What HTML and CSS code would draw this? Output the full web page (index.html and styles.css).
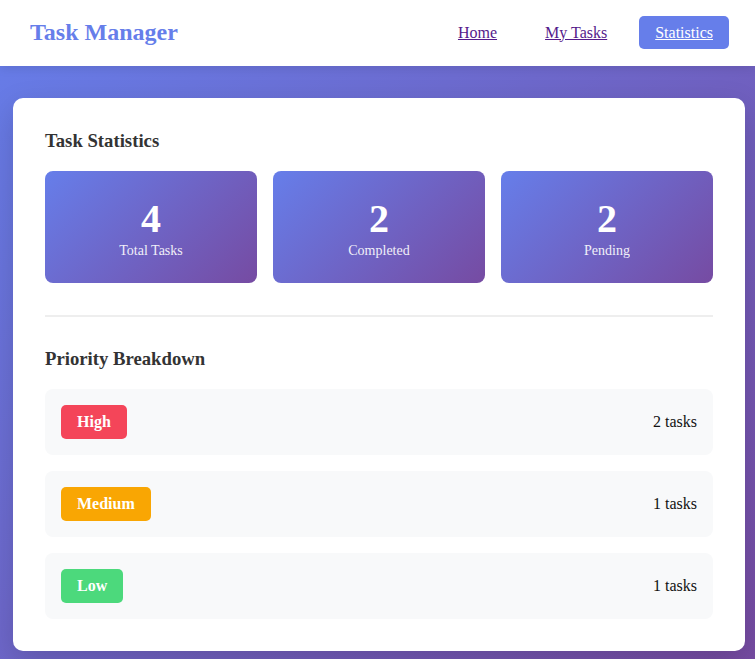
FILE: index.html
```html
<!DOCTYPE html>
<html lang="en">
<head>
<meta charset="utf-8">
<title>Task Manager</title>
<link rel="stylesheet" href="styles.css">
</head>
<body>
<header class="topbar">
  <div class="brand">Task Manager</div>
  <nav class="nav">
    <a class="nav-link" href="#home">Home</a>
    <a class="nav-link" href="#tasks">My Tasks</a>
    <a class="nav-link active" href="#stats">Statistics</a>
  </nav>
</header>
<main class="main">
  <section class="card">
    <h2 class="section-title">Task Statistics</h2>
    <div class="stats">
      <div class="stat"><div class="stat-num">4</div><div class="stat-label">Total Tasks</div></div>
      <div class="stat"><div class="stat-num">2</div><div class="stat-label">Completed</div></div>
      <div class="stat"><div class="stat-num">2</div><div class="stat-label">Pending</div></div>
    </div>
    <hr class="divider">
    <h2 class="section-title">Priority Breakdown</h2>
    <div class="rows">
      <div class="row"><span class="badge high">High</span><span class="count">2 tasks</span></div>
      <div class="row"><span class="badge medium">Medium</span><span class="count">1 tasks</span></div>
      <div class="row"><span class="badge low">Low</span><span class="count">1 tasks</span></div>
    </div>
  </section>
</main>
</body>
</html>
```
FILE: styles.css
```css
html, body {
  margin: 0;
  padding: 0;
}
body {
  font-family: "Liberation Serif", "Times New Roman", serif;
  min-height: 100vh;
  background: linear-gradient(135deg, #667eea 0%, #764ba2 100%);
}
.topbar {
  background: #fff;
  height: 66px;
  box-sizing: border-box;
  padding: 0 26px 0 30px;
  display: flex;
  align-items: center;
  justify-content: space-between;
  box-shadow: 0 2px 10px rgba(0, 0, 0, 0.1);
}
.brand {
  font-size: 24px;
  font-weight: bold;
  color: #667eea;
  margin-top: -1px;
}
.nav {
  display: flex;
  gap: 16px;
  margin-top: -2px;
}
.nav-link {
  font-size: 16px;
  line-height: 17px;
  padding: 8px 16px;
  border-radius: 5px;
  color: #551a8b;
  text-decoration: underline;
}
.nav-link.active {
  background: #667eea;
  color: #fff;
}
.main {
  padding: 32px 10px 8px 13px;
}
.card {
  background: #fff;
  border-radius: 10px;
  padding: 32px;
  box-shadow: 0 10px 30px rgba(0, 0, 0, 0.15);
}
.section-title {
  margin: 0 0 19px;
  font-size: 18.72px;
  line-height: 22px;
  font-weight: bold;
  color: #333;
}
.stats {
  display: grid;
  grid-template-columns: repeat(3, 1fr);
  gap: 16px;
}
.stat {
  background: linear-gradient(135deg, #667eea 0%, #764ba2 100%);
  border-radius: 8px;
  padding: 25px 10px 23px;
  text-align: center;
  color: #fff;
}
.stat-num {
  font-size: 40px;
  line-height: 46px;
  font-weight: bold;
}
.stat-label {
  font-size: 14px;
  line-height: 18px;
  opacity: 0.9;
}
.divider {
  border: 0;
  height: 2px;
  background: #eee;
  margin: 32px 0 31px;
}
.rows {
  display: flex;
  flex-direction: column;
  gap: 16px;
}
.row {
  background: #f8f9fa;
  border-radius: 8px;
  padding: 16px;
  display: flex;
  align-items: center;
  justify-content: space-between;
}
.badge {
  color: #fff;
  font-weight: bold;
  font-size: 16px;
  line-height: 18px;
  padding: 8px 16px;
  border-radius: 5px;
}
.badge.high { background: #f44559; }
.badge.medium { background: #f9a603; }
.badge.low { background: #4cd97c; }
.count {
  font-size: 16px;
  color: #111;
}
```
